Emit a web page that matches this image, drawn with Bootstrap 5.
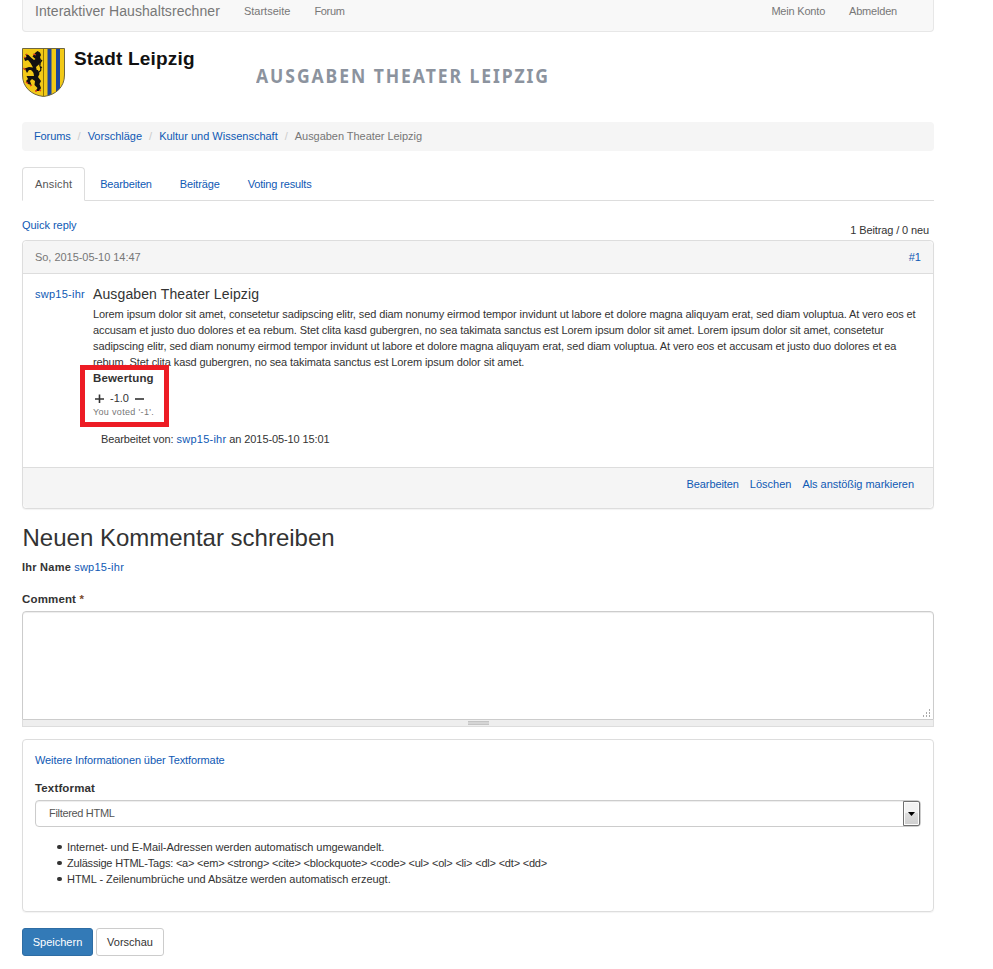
<!DOCTYPE html>
<html lang="de">
<head>
<meta charset="utf-8">
<title>Ausgaben Theater Leipzig</title>
<meta name="viewport" content="width=device-width, initial-scale=1">
<link href="https://cdn.jsdelivr.net/npm/bootstrap@5.3.0/dist/css/bootstrap.min.css" rel="stylesheet">
<style>
body{font:11px/16px "Liberation Sans",Arial,sans-serif;color:#333;background:#fff;height:969px;overflow:hidden}
a{color:#0f59b4;text-decoration:none}
.page-wrap{width:912px;margin-left:22px}
.page-wrap span,.page-wrap a,.page-wrap li,.page-wrap h2,.page-wrap h3{white-space:nowrap}
.topbar{height:32px;background:#f8f8f8;border:1px solid #e7e7e7;border-top:0;border-radius:0 0 4px 4px;padding:0 36px 9px 12px}
.topbar a{color:#777}
.topbar .navbar-brand{font-size:14px;line-height:16px;padding:0;margin:0 24px 0 0;letter-spacing:.07px}
.masthead{height:90px;padding-top:16px}
.wordmark{font-size:19px;line-height:22px;font-weight:700;color:#111;margin-left:9px;letter-spacing:.2px}
.page-title{font:700 19.5px/24px "Noto Sans",sans-serif;color:#8c939e;margin:16px 0 0 61px;text-transform:uppercase;letter-spacing:2.15px;transform:scaleX(.9);transform-origin:0 0}
.breadcrumb{height:29px;background:#f5f5f5;border-radius:4px;padding:6px 12px;margin:0 0 16px;font-size:11px;--bs-breadcrumb-item-padding-x:7px;--bs-breadcrumb-divider-color:#ccc;--bs-breadcrumb-item-active-color:#777;flex-wrap:nowrap}
.nav-tabs{--bs-nav-tabs-border-color:#ddd;height:34px}
.nav-tabs .nav-link{font-size:11px;line-height:16px;padding:8px 12px;height:34px;color:#0f59b4;margin-right:2px;border-radius:4px 4px 0 0;letter-spacing:-.15px}
.nav-tabs .nav-link.active{color:#555;border-color:#ddd #ddd #fff;letter-spacing:.15px}
.subhead{height:39px;padding:16px 5px 2px 0}
.post{height:269px;border:1px solid #ddd;border-radius:4px;box-shadow:0 1px 1px rgba(0,0,0,.05)}
.post .card-header{height:33px;background:#f5f5f5;border-color:#ddd;padding:8px 12px;color:#777}
.post .card-body{padding:12px 12px 0}
.post .card-footer{height:41px;background:#f5f5f5;border-color:#ddd;padding:8px 19px;gap:11px}
.author{width:58px}
.post h3{font-size:14px;line-height:16px;margin:0 0 4px;letter-spacing:.12px}
.vote-row{margin-top:4px;height:16px;padding-left:2px}
.score{margin:0 6px}
.vote-note{font-size:9px;line-height:12px;color:#777;display:block;letter-spacing:.33px}
.highlight{position:absolute;left:-13px;top:79px;width:89px;height:62px;border:5px solid #ed1c24}
.edited{margin:13px 0 0 8px}
.reply-title{font-size:24px;line-height:28px;margin:15px 0 7px;padding-left:.5px}
.field-label{font-weight:700;font-size:11.5px;letter-spacing:.15px}
.required{color:#7a4a2a}
.comment-box{height:109px;border:1px solid #ccc;border-radius:4px 4px 0 0;box-shadow:inset 0 1px 1px rgba(0,0,0,.075);margin-top:4px;padding:1px;resize:none;display:block}
.grip-dots{right:3px;bottom:2px}
.grippie{height:7px;background:#eee;border:1px solid #ddd;border-top:0}
.grippie i{width:21px;height:4px;background:#d5d5d5;border-top:1px solid #c4c4c4;border-bottom:1px solid #c4c4c4;margin-top:1px}
.format-panel{height:173px;border:1px solid #ddd;border-radius:4px;box-shadow:0 1px 1px rgba(0,0,0,.05);margin:12px 0 16px;padding:12px}
.picker{height:27px;border:1px solid #ccc;border-radius:4px;box-shadow:inset 0 1px 1px rgba(0,0,0,.075);margin:4px 0 12px;padding-left:13px;color:#555}
.picker>span{margin-top:-1px}
.picker-btn{width:17px;height:25px;border:1px solid #707070;border-radius:0 2px 2px 0;background:linear-gradient(#f2f2f2 0 45%,#ddd 50%,#cfcfcf);box-shadow:inset 0 0 0 1px #fcfcfc}
.tips{padding-left:32px;margin:0}
.tips li{list-style:none;display:flex;align-items:center}
.tips li::before{content:"";width:4.5px;height:4.5px;border-radius:50%;background:#333;margin:0 5.5px 0 -10px}
.btn{font-size:11px;line-height:16px;height:28px;padding:5px 0;border-radius:3px;--bs-btn-border-radius:3px}
.btn-save{width:71px;background:#337ab7;border-color:#2e6da4;color:#fff}
.btn-prev{width:68px;background:#fff;border-color:#ccc;color:#333;margin-left:3px}
.user-link{letter-spacing:.25px}
.tight-1{letter-spacing:-.04px}
.tight-2{letter-spacing:-.1px}
.tight-3{letter-spacing:-.12px}
.tight-4{letter-spacing:-.2px}
.tight-5{letter-spacing:-.32px}
</style>
</head>
<body>
<div class="page-wrap">
  <nav class="topbar d-flex align-items-center">
    <a class="navbar-brand" href="#">Interaktiver Haushaltsrechner</a>
    <a href="#">Startseite</a>
    <a href="#" class="ms-4 tight-5">Forum</a>
    <a href="#" class="ms-auto tight-4">Mein Konto</a>
    <a href="#" class="ms-4 tight-4">Abmelden</a>
  </nav>

  <header class="masthead d-flex align-items-start">
    <svg width="43" height="49" viewBox="0 0 43 49">
      <defs><clipPath id="shield"><path d="M.5 .5H42.500V27C42.500 39 34 47 21.500 48.500C9 47 .5 39 .5 27Z"/></clipPath></defs>
      <g clip-path="url(#shield)">
        <path fill="#f2c916" d="M0 0h43v49H0z"/>
        <path fill="#1c449c" d="M25.500 0h4v49h-4zM34 0h4v49h-4z"/>
        <path fill="#8f7604" d="M21 0h1v49h-1z"/>
        <path fill="#111" d="M13 5L15.500 3L18 4.500L19 7L18 9L19 12L17.500 16L14 19L15 23L12 25L9 22L7 22L5 25L3.500 22L1.500 21L4 20L7 19L11 19.500L8.500 15L6 12L3 13L2 10L4.500 9L3.500 6L6.500 7L9.500 10L12 12L13.500 11L10.500 8.500Z"/>
        <path fill="#111" d="M11 22L16 22L17.500 26L16 29L19 33L17.500 36L19 40L17.500 43L13.500 43L15.500 40L12.500 37L13 33L10 31L8 33L9.500 37L6 36L4 33L6 31L4.500 28L8 28L12 28Z"/>
        <path d="M15 25Q21 23 18 18Q17 15 20 12M18 20L20 19" fill="none" stroke="#111" stroke-width="1.200"/>
        <path d="M11 6l3 1M2 9l1.500 1M1.500 20l2 2M4 34l2 1.500M13 43h2M8 38l2-1M4 6l1 1M17 42l2 1" stroke="#e03a1c" stroke-width="1.300"/>
      </g>
      <path d="M.5 .5H42.500V27C42.500 39 34 47 21.500 48.500C9 47 .5 39 .5 27Z" fill="none" stroke="#6f6640"/>
    </svg>
    <span class="wordmark">Stadt Leipzig</span>
    <h2 class="page-title">Ausgaben Theater Leipzig</h2>
  </header>

  <ol class="breadcrumb">
    <li class="breadcrumb-item tight-3"><a href="#">Forums</a></li>
    <li class="breadcrumb-item"><a href="#">Vorschläge</a></li>
    <li class="breadcrumb-item"><a href="#">Kultur und Wissenschaft</a></li>
    <li class="breadcrumb-item active tight-1"><span>Ausgaben Theater Leipzig</span></li>
  </ol>

  <ul class="nav nav-tabs">
    <li class="nav-item"><a class="nav-link active" href="#">Ansicht</a></li>
    <li class="nav-item"><a class="nav-link" href="#">Bearbeiten</a></li>
    <li class="nav-item"><a class="nav-link" href="#">Beiträge</a></li>
    <li class="nav-item"><a class="nav-link" href="#">Voting results</a></li>
  </ul>

  <div class="subhead d-flex justify-content-between">
    <a href="#" class="tight-1">Quick reply</a>
    <span class="mt-auto tight-3">1 Beitrag / 0 neu</span>
  </div>

  <article class="card post">
    <div class="card-header d-flex justify-content-between">
      <span class="tight-1">So, 2015-05-10 14:47</span><a href="#">#1</a>
    </div>
    <div class="card-body d-flex align-items-start">
      <div class="author flex-shrink-0"><a class="user-link" href="#">swp15-ihr</a></div>
      <div class="position-relative">
        <h3><span>Ausgaben Theater Leipzig</span></h3>
        <span class="d-block tight-2">Lorem ipsum dolor sit amet, consetetur sadipscing elitr, sed diam nonumy eirmod tempor invidunt ut labore et dolore magna aliquyam erat, sed diam voluptua. At vero eos et<br>accusam et justo duo dolores et ea rebum. Stet clita kasd gubergren, no sea takimata sanctus est Lorem ipsum dolor sit amet. Lorem ipsum dolor sit amet, consetetur<br>sadipscing elitr, sed diam nonumy eirmod tempor invidunt ut labore et dolore magna aliquyam erat, sed diam voluptua. At vero eos et accusam et justo duo dolores et ea<br>rebum. Stet clita kasd gubergren, no sea takimata sanctus est Lorem ipsum dolor sit amet.</span>
        <div class="field-label"><span>Bewertung</span></div>
        <div class="vote-row d-flex align-items-center">
          <svg width="9" height="9" viewBox="0 0 9 9"><path d="M0 5h9M4.500 .5v9" stroke="#333" stroke-width="1.600"/></svg>
          <span class="score">-1.0</span>
          <svg width="9" height="9" viewBox="0 0 9 9"><path d="M0 5h9" stroke="#333" stroke-width="1.600"/></svg>
        </div>
        <span class="vote-note">You voted '-1'.</span>
        <div class="edited"><span class="tight-2">Bearbeitet von: <a class="user-link" href="#">swp15-ihr</a> an 2015-05-10 15:01</span></div>
        <div class="highlight"></div>
      </div>
    </div>
    <div class="card-footer d-flex justify-content-end">
      <a href="#" class="tight-2">Bearbeiten</a><a href="#">Löschen</a><a href="#" class="tight-1">Als anstößig markieren</a>
    </div>
  </article>

  <h2 class="reply-title"><span>Neuen Kommentar schreiben</span></h2>
  <div class="mb-3"><span class="fw-bold user-link">Ihr Name</span> <a class="user-link" href="#">swp15-ihr</a></div>
  <div class="field-label"><span>Comment <span class="required">*</span></span></div>
  <div class="position-relative">
    <textarea class="comment-box w-100" aria-label="Comment"></textarea>
    <svg class="grip-dots position-absolute" width="9" height="9" viewBox="0 0 9 9"><path fill="#aaa" d="M7 0h1v2H7zM4 3h1v2H4zM7 3h1v2H7zM1 6h1v2H1zM4 6h1v2H4zM7 6h1v2H7z"/></svg>
  </div>
  <div class="grippie d-flex justify-content-center"><i></i></div>

  <section class="format-panel">
    <div class="mb-2 pb-1"><a href="#" class="tight-2">Weitere Informationen über Textformate</a></div>
    <div class="field-label"><span>Textformat</span></div>
    <div class="picker d-flex align-items-center justify-content-between">
      <span class="tight-5">Filtered HTML</span>
      <div class="picker-btn d-flex align-items-center justify-content-center"><svg width="7" height="4" viewBox="0 0 7 4"><path d="M0 0h7L3.500 4z"/></svg></div>
    </div>
    <ul class="tips">
      <li><span class="tight-1">Internet- und E-Mail-Adressen werden automatisch umgewandelt.</span></li>
      <li><span class="tight-4">Zulässige HTML-Tags: &lt;a&gt; &lt;em&gt; &lt;strong&gt; &lt;cite&gt; &lt;blockquote&gt; &lt;code&gt; &lt;ul&gt; &lt;ol&gt; &lt;li&gt; &lt;dl&gt; &lt;dt&gt; &lt;dd&gt;</span></li>
      <li><span class="tight-1">HTML - Zeilenumbrüche und Absätze werden automatisch erzeugt.</span></li>
    </ul>
  </section>

  <div class="d-flex"><button class="btn btn-save">Speichern</button><button class="btn btn-prev">Vorschau</button></div>
</div>
<script src="https://cdn.jsdelivr.net/npm/bootstrap@5.3.0/dist/js/bootstrap.bundle.min.js"></script>
</body>
</html>
